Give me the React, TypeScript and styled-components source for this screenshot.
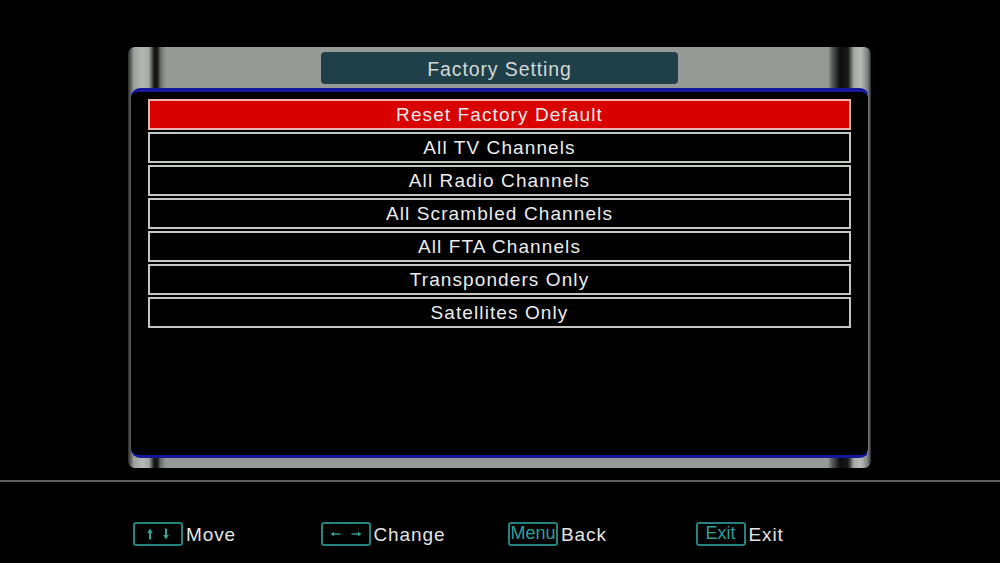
import React from "react"
import styled, { createGlobalStyle } from "styled-components"

const GlobalStyle = createGlobalStyle`
    html, body {
        margin: 0;
        padding: 0;
        background: #000;
    }
    body {
        font-family: 'Liberation Sans', Arial, sans-serif;
    }
`

const Screen = styled.div`
    width: 1000px;
    height: 563px;
    overflow: hidden;
    background: #000;
    padding-top: 47px;
    box-sizing: border-box;
`

const Frame = styled.section`
    width: 743px;
    height: 421px;
    margin-left: 128px;
    border-radius: 7px;
    display: flex;
    flex-direction: column;
    background: linear-gradient(to right,
        #2a2a2a 0px, #9ea29e 6px, #b4b8b4 14px, #a4a8a4 21px,
        #1a1a1a 26px, #101010 29px, #6e726e 33px, #969a96 38px,
        #969a96 700px, #5a5e5a 704px, #0e0e0e 712px, #181818 720px,
        #a8aca8 726px, #b8bcb8 733px, #7a7e7a 740px, #2a2a2a 743px);
`

const Header = styled.header`
    height: 41px;
    flex-shrink: 0;
    display: flex;
    justify-content: center;
    align-items: flex-start;
    padding-top: 5px;
    box-sizing: border-box;
`

const TitleBox = styled.div`
    width: 357px;
    height: 32px;
    border-radius: 4px;
    background: #1f3f49;
    color: #d4d8d4;
    font-size: 19.5px;
    letter-spacing: 0.9px;
    padding-top: 2px;
    box-sizing: border-box;
    display: flex;
    align-items: center;
    justify-content: center;
`

const Panel = styled.div`
    height: 370px;
    flex-shrink: 0;
    margin: 0 2px 0 3px;
    box-sizing: border-box;
    background: #000;
    border-top: 4px solid #16169a;
    border-bottom: 3px solid #16169a;
    border-right: 1px solid #7a7a7a;
    border-radius: 9px;
    padding: 7px 17px 0 17px;
    display: flex;
    flex-direction: column;
    gap: 2px;
`

const Row = styled.div<{ $active?: boolean }>`
    height: 31px;
    flex-shrink: 0;
    box-sizing: border-box;
    border: 2px solid ${p => (p.$active ? "#e9b4b0" : "#c4c6c4")};
    background: ${p => (p.$active ? "#d90000" : "#000")};
    color: #ececec;
    font-size: 19px;
    letter-spacing: 1.1px;
    display: flex;
    align-items: center;
    justify-content: center;
`

const Separator = styled.div`
    height: 2px;
    margin-top: 12px;
    background: #5e5e5e;
`

const Footer = styled.footer`
    margin-top: 39px;
    padding-left: 133px;
    display: flex;
`

const Hint = styled.div`
    width: 187.5px;
    display: flex;
    align-items: center;
    gap: 3px;
    color: #e4e4e4;
    font-size: 19px;
    letter-spacing: 0.9px;
`

const Key = styled.span`
    width: 50px;
    height: 24px;
    box-sizing: border-box;
    border: 2px solid #26827e;
    border-radius: 3px;
    color: #2f9e98;
    font-size: 18px;
    letter-spacing: 0;
    display: flex;
    align-items: center;
    justify-content: center;
    gap: 10px;
`

const HintLabel = styled.span`
    padding-top: 3px;
`

const teal = "#2fa39c"

const ArrowV: React.FC<{ down?: boolean }> = ({ down }) => (
    <svg width="6" height="12" viewBox="0 0 6 12">
        <g transform={down ? "rotate(180 3 6)" : undefined}>
            <path d="M3 0.5 L5.8 5 L0.2 5 Z" fill={teal} />
            <rect x="2" y="4" width="2" height="7.5" fill={teal} />
        </g>
    </svg>
)

const ArrowH: React.FC<{ right?: boolean }> = ({ right }) => (
    <svg width="11" height="6" viewBox="0 0 11 6">
        <g transform={right ? "rotate(180 5.5 3)" : undefined}>
            <path d="M0.5 3 L4 0.8 L4 5.2 Z" fill={teal} />
            <rect x="3" y="2.3" width="7.5" height="1.4" fill={teal} />
        </g>
    </svg>
)

const items = [
    "Reset Factory Default",
    "All TV Channels",
    "All Radio Channels",
    "All Scrambled Channels",
    "All FTA Channels",
    "Transponders Only",
    "Satellites Only",
]

const App: React.FC = () => {
    return <Screen>
        <GlobalStyle />
        <Frame>
            <Header>
                <TitleBox>Factory Setting</TitleBox>
            </Header>
            <Panel>
                {items.map((item, index) => (
                    <Row key={item} $active={index === 0}>{item}</Row>
                ))}
            </Panel>
        </Frame>
        <Separator />
        <Footer>
            <Hint>
                <Key><ArrowV /><ArrowV down /></Key>
                <HintLabel>Move</HintLabel>
            </Hint>
            <Hint>
                <Key><ArrowH /><ArrowH right /></Key>
                <HintLabel>Change</HintLabel>
            </Hint>
            <Hint>
                <Key>Menu</Key>
                <HintLabel>Back</HintLabel>
            </Hint>
            <Hint>
                <Key>Exit</Key>
                <HintLabel>Exit</HintLabel>
            </Hint>
        </Footer>
    </Screen>
}

export default App
